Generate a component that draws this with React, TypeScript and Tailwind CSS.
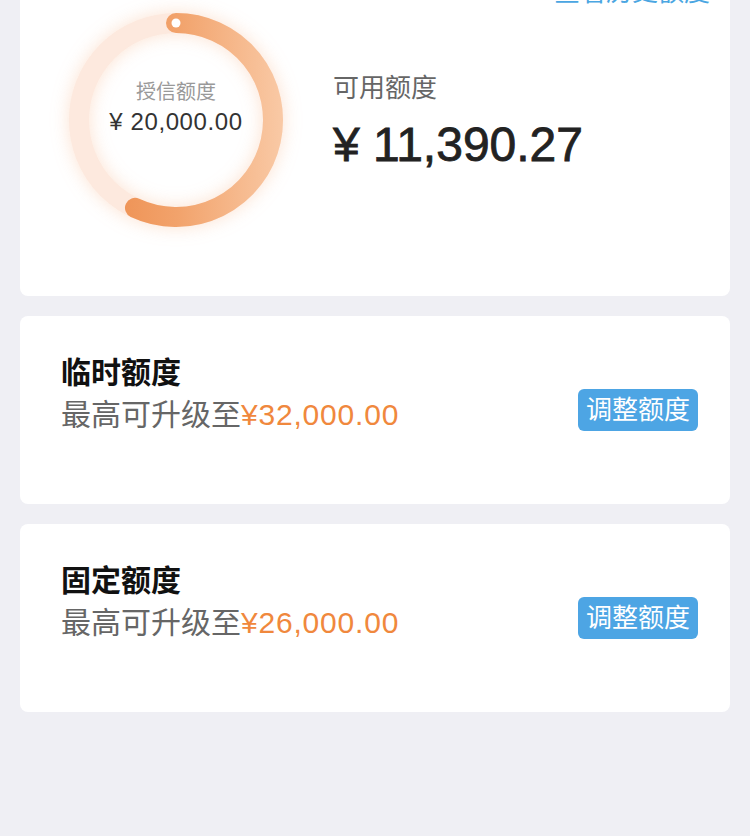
import React from 'react';

const FONT = { fontFamily: '"Liberation Sans", "Noto Sans CJK SC", sans-serif' };

interface QuotaCardProps {
  title: string;
  amount: string;
}

// ring geometry (212px box)
const CX = 106;
const CY = 106;
const R = 97;

function arcPath(ratio: number) {
  const angle = ratio * 2 * Math.PI;
  const x = CX + R * Math.sin(angle);
  const y = CY - R * Math.cos(angle);
  const large = ratio > 0.5 ? 1 : 0;
  return `M${CX} ${CY - R} A${R} ${R} 0 ${large} 1 ${x.toFixed(2)} ${y.toFixed(2)}`;
}

function CreditRing({ total, used }: { total: string; used: number }) {
  return (
    <div className="relative w-[212px] h-[212px] shrink-0">
      <svg
        width="212"
        height="212"
        viewBox="0 0 212 212"
        className="overflow-visible drop-shadow-[0_0_9px_rgba(245,150,90,0.28)]"
      >
        <defs>
          <linearGradient id="arcGrad" gradientUnits="userSpaceOnUse" x1="40" y1="0" x2="212" y2="0">
            <stop offset="0" stopColor="#ee9153" />
            <stop offset="0.4" stopColor="#f2a36c" />
            <stop offset="1" stopColor="#f9c9a5" />
          </linearGradient>
        </defs>
        <circle cx={CX} cy={CY} r={R} fill="none" stroke="#fde9de" strokeWidth="20" />
        <path d={arcPath(used)} fill="none" stroke="url(#arcGrad)" strokeWidth="20" strokeLinecap="round" />
        <circle cx={CX} cy={CY - R} r="4.5" fill="#ffffff" />
      </svg>
      <div className="absolute inset-0 flex flex-col items-center justify-center pb-[24px]">
        <span className="text-[20px] leading-[28px] text-[#999999]">授信额度</span>
        <span className="text-[24px] leading-[32px] text-[#333333] tracking-[0.6px]">{total}</span>
      </div>
    </div>
  );
}

function QuotaCard({ title, amount }: QuotaCardProps) {
  return (
    <div className="mt-[20px] h-[188px] bg-white rounded-[8px] pl-[41px] pr-[32px] flex items-center justify-between">
      <div className="mb-[31px]">
        <div className="text-[30px] leading-[40px] font-bold text-[#111111]">{title}</div>
        <div className="text-[30px] leading-[44px] text-[#666666]">
          最高可升级至<span className="text-[#f0883d] tracking-[0.8px]">{amount}</span>
        </div>
      </div>
      <button className="w-[120px] h-[42px] rounded-[6px] bg-[#4da5e4] text-white text-[26px] leading-[42px]">
        调整额度
      </button>
    </div>
  );
}

export default function App() {
  return (
    <div className="min-h-[836px] bg-[#efeff4] px-[20px] overflow-hidden" style={FONT}>
      <div className="-mt-[26px] bg-white rounded-b-[8px] pl-[50px] pr-[20px] pb-[70px]">
        <div className="h-[36px] flex justify-end items-center">
          <span className="text-[26px] leading-[36px] text-[#4aa6e2]">查看历史额度</span>
        </div>
        <div className="mt-[4px] flex">
          <CreditRing total="¥ 20,000.00" used={11390.27 / 20000} />
          <div className="ml-[51px] mt-[57px]">
            <div className="text-[26px] leading-[34px] text-[#666666]">可用额度</div>
            <div className="mt-[10px] text-[48px] leading-[60px] text-[#222222] [-webkit-text-stroke:0.8px_#222222]">
              ¥ 11,390.27
            </div>
          </div>
        </div>
      </div>
      <QuotaCard title="临时额度" amount="¥32,000.00" />
      <QuotaCard title="固定额度" amount="¥26,000.00" />
    </div>
  );
}
